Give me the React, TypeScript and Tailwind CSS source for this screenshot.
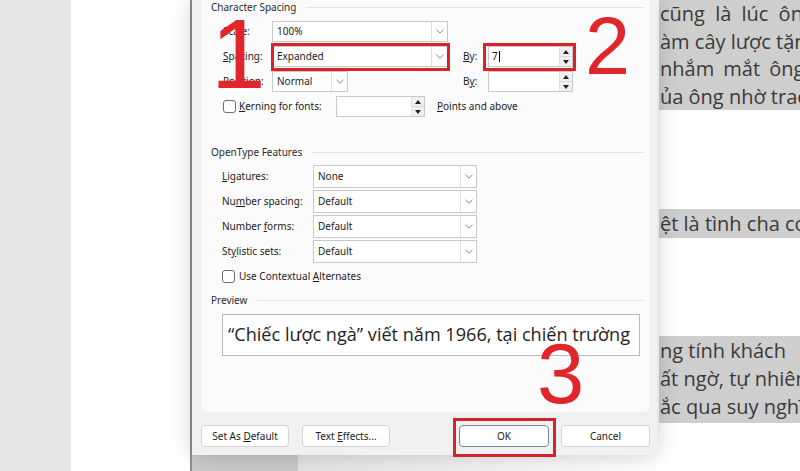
import React from 'react';

const ui = { fontFamily: '"Noto Sans", "Open Sans", sans-serif' };
const doc = { fontFamily: '"Open Sans", "Noto Sans", sans-serif' };
const mark = { fontFamily: '"Liberation Sans", Arial, sans-serif' };

const Chevron = () => (
  <svg width="8" height="5" viewBox="0 0 8 5" fill="none">
    <path d="M0.5 0.8 L4 4.2 L7.5 0.8" stroke="#7a7a7a" strokeWidth="0.9" />
  </svg>
);

const Combo = ({ value, w, h = 21 }: { value: string; w: string; h?: string | number }) => (
  <div className={`flex ${w} border border-[#c9c9c9] bg-white`} style={{ height: h }}>
    <span className="flex-1 flex items-center pl-[4px] text-[10px] text-[#1b1b1b]">{value}</span>
    <span className="w-[16px] flex items-center justify-center border-l border-[#dedede]">
      <Chevron />
    </span>
  </div>
);

const Spin = ({ value, w }: { value?: string; w: string }) => (
  <div className={`flex ${w} h-[21px] border border-[#c9c9c9] bg-white`}>
    <span className="flex-1 flex items-center pl-[3px] text-[10px] text-[#1b1b1b]">
      {value}
      {value && <span className="ml-[1px] inline-block w-px h-[11px] bg-black" />}
    </span>
    <span className="w-[13px] flex flex-col border-l border-[#e2e2e2]">
      <span className="flex-1 flex items-center justify-center bg-[#f0f0f0] border-b border-[#dcdcdc]">
        <svg width="6" height="4" viewBox="0 0 6 4"><path d="M0 4 L3 0 L6 4 Z" fill="#222" /></svg>
      </span>
      <span className="flex-1 flex items-center justify-center bg-[#f0f0f0]">
        <svg width="6" height="4" viewBox="0 0 6 4"><path d="M0 0 L3 4 L6 0 Z" fill="#222" /></svg>
      </span>
    </span>
  </div>
);

const Check = () => <span className="inline-block w-[13px] h-[13px] rounded-[3px] border border-[#6e6e6e] bg-white" />;

const Section = ({ title }: { title: string }) => (
  <div className="flex items-center h-[14px] pl-[9px] pr-[6px] gap-[10px]">
    <span className="text-[10px] text-[#2a2a2a] whitespace-nowrap">{title}</span>
    <span className="flex-1 h-px bg-[#e3e3e3]" />
  </div>
);

const Btn = ({ children, w, def }: { children: React.ReactNode; w: string; def?: boolean }) => (
  <div
    className={`${w} h-[22px] flex items-center justify-center rounded-[4px] bg-white text-[10px] text-[#1b1b1b] border ${
      def ? 'border-[#6f8d9b]' : 'border-[#d3d3d3]'
    }`}
  >
    <span className="whitespace-pre">{children}</span>
  </div>
);

const U = ({ children }: { children: React.ReactNode }) => <span className="underline underline-offset-[1px]">{children}</span>;

export default function App() {
  return (
    <div className="w-[800px] h-[471px] flex overflow-hidden bg-white" style={ui}>
      {/* left gray margin + page */}
      <div className="w-[71px] h-full bg-[#e6e6e6]" />
      <div className="w-[121px] h-full bg-white border-r-2 border-[#8f8f8f]" />

      {/* dialog column */}
      <div className="w-[465px] h-full flex flex-col">
        <div className="relative z-10 h-[455px] bg-[#f1f1f1] rounded-b-[7px] shadow-[0_0_22px_rgba(0,0,0,0.2)] flex flex-col">
          <div className="ml-[10px] mr-[7px] h-[413px] bg-[#fbfbfb] rounded-b-[5px] border-b border-[#ececec] flex flex-col">
            <Section title="Character Spacing" />

            <div className="mt-[5px] flex flex-col pl-[21px] text-[10px] text-[#1b1b1b]">
              <div className="h-[25px] flex items-center">
                <span className="w-[49px]">Scale:</span>
                <Combo value="100%" w="w-[176px]" />
              </div>
              <div className="h-[25px] flex items-center">
                <span className="w-[49px]"><U>S</U>pacing:</span>
                <Combo value="Expanded" w="w-[176px]" />
                <span className="ml-[15px] w-[25px]"><U>B</U>y:</span>
                <Spin value="7" w="w-[85px]" />
              </div>
              <div className="h-[25px] flex items-center">
                <span className="w-[49px]"><U>P</U>osition:</span>
                <Combo value="Normal" w="w-[76px]" />
                <span className="ml-[115px] w-[25px]">B<U>y</U>:</span>
                <Spin w="w-[85px]" />
              </div>
              <div className="h-[25px] flex items-center">
                <Check />
                <span className="ml-[3px] w-[97px]"><U>K</U>erning for fonts:</span>
                <Spin w="w-[89px]" />
                <span className="ml-[12px]"><U>P</U>oints and above</span>
              </div>
            </div>

            <div className="mt-[26px]">
              <Section title="OpenType Features" />
            </div>

            <div className="mt-[5px] flex flex-col pl-[20px] text-[10px] text-[#1b1b1b]">
              <div className="h-[25px] flex items-center">
                <span className="w-[91px]"><U>L</U>igatures:</span>
                <Combo value="None" w="w-[164px]" h={23} />
              </div>
              <div className="h-[25px] flex items-center">
                <span className="w-[91px]">Nu<U>m</U>ber spacing:</span>
                <Combo value="Default" w="w-[164px]" h={23} />
              </div>
              <div className="h-[25px] flex items-center">
                <span className="w-[91px]">Number <U>f</U>orms:</span>
                <Combo value="Default" w="w-[164px]" h={23} />
              </div>
              <div className="h-[25px] flex items-center">
                <span className="w-[91px]">St<U>y</U>listic sets:</span>
                <Combo value="Default" w="w-[164px]" h={23} />
              </div>
              <div className="h-[25px] flex items-center">
                <Check />
                <span className="ml-[4px]">Use Contextual <U>A</U>lternates</span>
              </div>
            </div>

            <div className="mt-[4px]">
              <Section title="Preview" />
            </div>

            <div className="mt-[7px] ml-[20px] w-[418px] h-[42px] bg-white border border-[#b9b9b9] flex items-center pl-[5px] overflow-hidden">
              <span className="text-[18.1px] text-[#1e1e1e] whitespace-nowrap" style={doc}>
                “Chiếc lược ngà” viết năm 1966, tại chiến trường
              </span>
            </div>
          </div>

          {/* button bar */}
          <div className="flex items-center pt-[12px] pl-[9px]">
            <Btn w="w-[88px]">Set As <U>D</U>efault</Btn>
            <div className="ml-[13px]"><Btn w="w-[88px]">Text <U>E</U>ffects...</Btn></div>
            <div className="ml-[69px]"><Btn w="w-[90px]" def>OK</Btn></div>
            <div className="ml-[12px]"><Btn w="w-[89px]">Cancel</Btn></div>
          </div>

          {/* annotations */}
          <div className="absolute left-[79px] top-[43px] w-[179px] h-[28px] border-[3px] border-[#d8232a]" />
          <div className="absolute left-[291px] top-[43px] w-[93px] h-[28px] border-[3px] border-[#d8232a]" />
          <div className="absolute left-[261px] top-[418px] w-[103px] h-[39px] border-[3px] border-[#d8232a]" />
          <span className="absolute left-[19px] top-[5px] text-[98px] leading-none text-[#e0262b]" style={mark}>1</span>
          <span className="absolute left-[393px] top-[6px] text-[81px] leading-none text-[#e0262b]" style={mark}>2</span>
          <span className="absolute left-[345px] top-[331px] text-[85px] leading-none text-[#e0262b]" style={mark}>3</span>
        </div>
        <div className="flex-1 flex">
          <div className="w-[106px] bg-[#cacaca]" />
          <div className="flex-1 bg-gradient-to-r from-[#e4e4e4] to-white" />
        </div>
      </div>

      {/* document text on the right */}
      <div className="w-[143px] h-full pl-[2px] flex flex-col overflow-hidden text-[20px] text-[#3a3a3a] whitespace-nowrap" style={doc}>
        <div className="h-[110px] bg-[#cecece] flex flex-col pl-[1px]">
          <span className="h-[27.5px] leading-[27.5px] [word-spacing:5px]">cũng là lúc ông</span>
          <span className="h-[27.5px] leading-[27.5px]">àm cây lược tặng</span>
          <span className="h-[27.5px] leading-[27.5px] [word-spacing:4px]">nhắm mắt ông</span>
          <span className="h-[27.5px] leading-[27.5px]">ủa ông nhờ trao</span>
        </div>
        <div className="h-[99px]" />
        <div className="h-[29px] bg-[#cecece] pl-[1px] leading-[29px]">ệt là tình cha con</div>
        <div className="h-[98px]" />
        <div className="h-[87px] bg-[#cecece] flex flex-col pl-[1px] pt-[1px]">
          <span className="h-[28px] leading-[28px]">ng tính khách</span>
          <span className="h-[28px] leading-[28px]">ất ngờ, tự nhiên</span>
          <span className="h-[28px] leading-[28px]">ắc qua suy nghĩ</span>
        </div>
      </div>
    </div>
  );
}
